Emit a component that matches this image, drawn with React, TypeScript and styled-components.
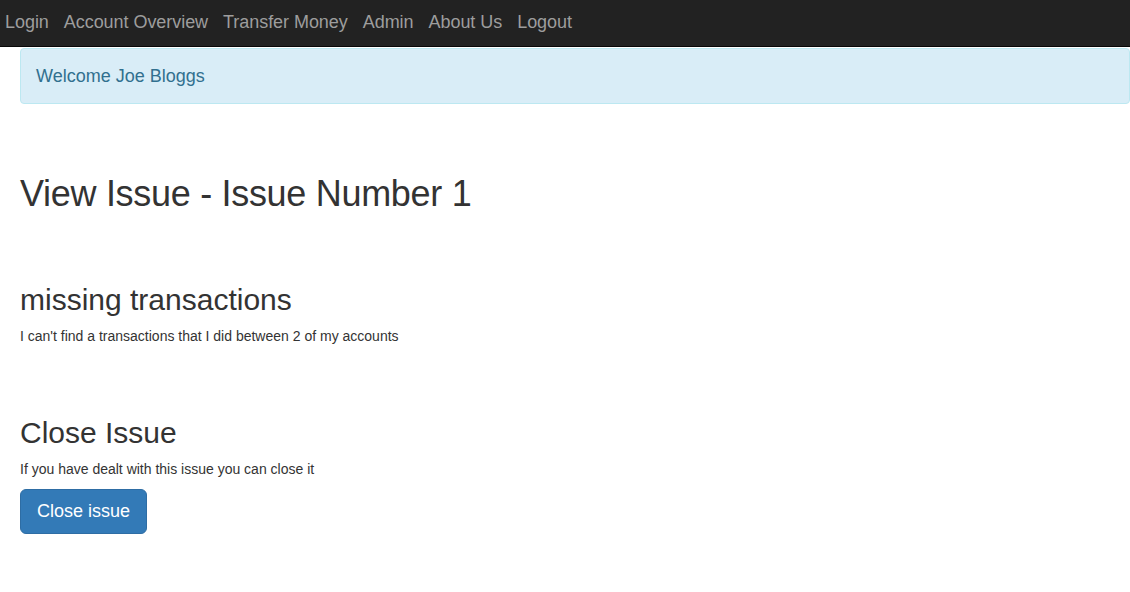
import React from "react";
import styled, { createGlobalStyle } from "styled-components";

const GlobalStyle = createGlobalStyle`
  html, body {
    margin: 0;
    padding: 0;
    background: #ffffff;
  }
  body {
    font-family: "Liberation Sans", Arial, Helvetica, sans-serif;
    font-size: 14px;
    color: #333333;
  }
  * { box-sizing: border-box; }
`;

const Navbar = styled.nav`
  height: 47px;
  background: #222222;
  border-bottom: 1px solid #080808;
`;

const NavList = styled.ul`
  list-style: none;
  margin: 0;
  padding: 12px 0 0 5px;
  display: flex;
  gap: 15px;
`;

const NavLink = styled.a`
  display: block;
  font-size: 18px;
  line-height: 20px;
  letter-spacing: -0.05px;
  color: #9d9d9d;
  text-decoration: none;
`;

const Container = styled.main`
  padding-left: 20px;
`;

const Alert = styled.div`
  margin-top: 1px;
  padding: 15px;
  border: 1px solid #bce8f1;
  border-radius: 4px;
  background: #d9edf7;
  color: #31708f;
  font-size: 18px;
  line-height: 24px;
`;

const Title = styled.h1`
  margin: 70px 0 0;
  font-size: 36px;
  font-weight: 400;
  line-height: 40px;
  letter-spacing: -0.3px;
  color: #333333;
`;

const SectionTitle = styled.h2<{ $gap: number }>`
  margin: ${(p) => p.$gap}px 0 10px;
  font-size: 30px;
  font-weight: 400;
  line-height: 33px;
  color: #333333;
`;

const Text = styled.p<{ $flush?: boolean }>`
  margin: 0 0 ${(p) => (p.$flush ? 0 : 10)}px;
  font-size: 14px;
  line-height: 20px;
  color: #333333;
`;

const Button = styled.button`
  display: inline-block;
  padding: 10px 16px;
  font-family: "Liberation Sans", Arial, Helvetica, sans-serif;
  font-size: 18px;
  line-height: 23px;
  color: #ffffff;
  background: #337ab7;
  border: 1px solid #2e6da4;
  border-radius: 6px;
  cursor: pointer;
`;

const links = ["Login", "Account Overview", "Transfer Money", "Admin", "About Us", "Logout"];

export default function App() {
  return (
    <>
      <GlobalStyle />
      <Navbar>
        <NavList>
          {links.map((l) => (
            <li key={l}>
              <NavLink href="#">{l}</NavLink>
            </li>
          ))}
        </NavList>
      </Navbar>
      <Container>
        <Alert>Welcome Joe Bloggs</Alert>
        <Title>View Issue - Issue Number 1</Title>
        <SectionTitle $gap={69}>missing transactions</SectionTitle>
        <Text $flush>I can't find a transactions that I did between 2 of my accounts</Text>
        <SectionTitle $gap={70}>Close Issue</SectionTitle>
        <Text>If you have dealt with this issue you can close it</Text>
        <Button>Close issue</Button>
      </Container>
    </>
  );
}
